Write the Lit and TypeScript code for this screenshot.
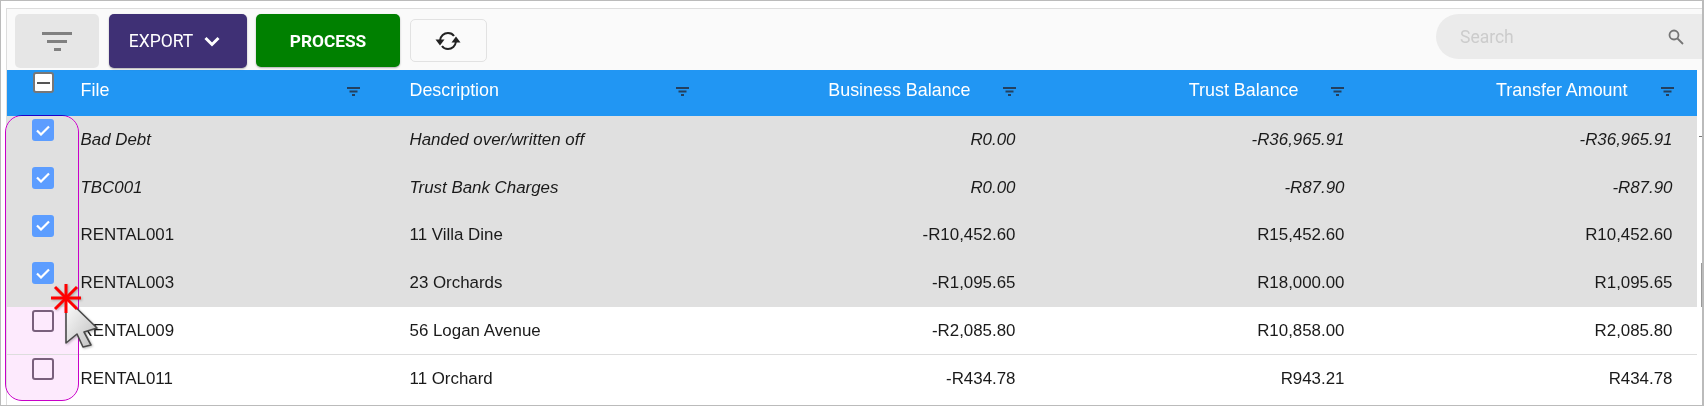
import { LitElement, html, css, svg } from "lit";
import { customElement } from "lit/decorators.js";

const rows = [
  { file: "Bad Debt", desc: "Handed over/written off", b: "R0.00", t: "-R36,965.91", a: "-R36,965.91", on: true, it: true },
  { file: "TBC001", desc: "Trust Bank Charges", b: "R0.00", t: "-R87.90", a: "-R87.90", on: true, it: true },
  { file: "RENTAL001", desc: "11 Villa Dine", b: "-R10,452.60", t: "R15,452.60", a: "R10,452.60", on: true, it: false },
  { file: "RENTAL003", desc: "23 Orchards", b: "-R1,095.65", t: "R18,000.00", a: "R1,095.65", on: true, it: false },
  { file: "RENTAL009", desc: "56 Logan Avenue", b: "-R2,085.80", t: "R10,858.00", a: "R2,085.80", on: false, it: false },
  { file: "RENTAL011", desc: "11 Orchard", b: "-R434.78", t: "R943.21", a: "R434.78", on: false, it: false },
];

const filterIcon = html`<svg class="hf" width="13" height="9" viewBox="0 0 13 9"><rect x="0" y="0" width="13" height="2"/><rect x="2.5" y="3.5" width="8" height="2"/><rect x="5" y="7" width="3" height="2"/></svg>`;

@customElement("app-root")
export class AppRoot extends LitElement {
  static styles = css`
    :host { display: block; width: 1704px; height: 406px; font-family: "Liberation Sans", Arial, sans-serif; }
    .frame { position: relative; box-sizing: border-box; width: 1704px; height: 406px; overflow: hidden; background: #fff;
      border: 1px solid #bbb; border-width: 1.5px 2px 1px 1.5px; padding: 7px 0 0 4.5px; }
    .panel { border-top: 1px solid #ddd; border-left: 1px solid #ddd; height: 100%; box-sizing: border-box; }
    .toolbar { height: 61px; box-sizing: border-box; background: #fafafa; display: flex; align-items: flex-start; padding: 5px 0 0 8px; }
    .btn { box-sizing: border-box; display: flex; align-items: center; justify-content: center; border-radius: 5px; font-family: Roboto, sans-serif; font-size: 17.5px; color: #fff; height: 54px; }
    .f { width: 84px; background: #e6e6e6; margin-right: 10px; }
    .exp { width: 138px; background: #3f3075; margin-right: 9px; gap: 11px; padding-right: 6px; box-shadow: 0 1px 2px rgba(0,0,0,.3); }
    .proc { width: 144px; height: 53px; background: #008000; margin-right: 10px; font-weight: 700; font-size: 17.3px; padding-left: 1px; box-shadow: 0 1px 2px rgba(0,0,0,.3); }
    .ref { width: 77px; height: 43px; margin-top: 5px; background: #fafafa; border: 1px solid #e2e2e2; }
    .search { margin-left: auto; width: 266px; height: 45px; background: #ebebeb; border-radius: 23px 0 0 23px; box-sizing: border-box; display: flex; align-items: center; justify-content: space-between; padding: 0 18px 0 24px; color: #ccc; font-family: Roboto, sans-serif; font-size: 17.5px; }
    .grid { display: grid; grid-template-columns: 58px 308px 329px 329px 328px 328px 10px; width: 1690px; }
    .head { height: 46px; background: #2196f3; color: #fff; font-size: 17.9px; }
    .hc { display: flex; align-items: center; height: 41px; padding-right: 13px; box-sizing: border-box; }
    .hc.first { padding-left: 16px; justify-content: space-between; }
    .hc.second { padding-left: 37px; justify-content: space-between; }
    .hc.num { justify-content: flex-end; gap: 33px; }
    .hc.bal { padding-right: 15px; gap: 32px; }
    .hf { fill: #24405e; flex: none; margin-top: 1px; }
    .cbox { position: relative; z-index: 3; box-sizing: border-box; width: 22px; height: 22px; border-radius: 3px; margin: 3px 0 0 25px; display: flex; align-items: center; justify-content: center; }
    .cbox.on { background: #5c9dff; }
    .cbox.off { border: 2px solid #79607c; }
    .cbox.ind { background: #fff; border: 2px solid #777; width: 21px; height: 21px; margin: 2px 0 0 26px; }
    .cbox.ind::after { content: ""; width: 13px; height: 2px; background: #555; }
    .row { height: 47.75px; font-size: 16.9px; color: #1a1a1a; }
    .row.sel { background: #e0e0e0; }
    .row.line { border-bottom: 1px solid #ddd; box-sizing: border-box; }
    .row.it { font-style: italic; }
    .c { display: flex; align-items: center; height: 47.75px; }
    .c.first { padding-left: 16px; }
    .c.second { padding-left: 37px; }
    .c.num { justify-content: flex-end; padding-right: 14px; }
    .c.num.bal { padding-right: 15px; }
    .hl { position: absolute; z-index: 2; left: 4px; top: 113.5px; width: 74px; height: 286px; box-sizing: border-box; border: 1px solid #c800c8; border-radius: 17px; background: #fdeafd; mix-blend-mode: darken; }
    .cursor { position: absolute; z-index: 4; left: 48px; top: 281px; filter: drop-shadow(1px 1px 1px rgba(0,0,0,.25)); }
    .tick { position: absolute; right: 0; top: 135px; width: 3px; height: 1px; background: #777; }
    .sb { position: absolute; right: -1px; top: 262px; width: 2px; height: 44px; background: #999; }
  `;

  render() {
    return html`<div class="frame">
      <div class="panel">
        <div class="toolbar">
          <div class="btn f"><svg width="30" height="19" viewBox="0 0 30 19" fill="#808080"><rect width="30" height="3"/><rect x="5" y="8" width="20" height="3"/><rect x="12" y="16" width="7" height="3"/></svg></div>
          <div class="btn exp"><span>EXPORT</span><svg width="16" height="11" viewBox="0 0 16 11" fill="none" stroke="#fff" stroke-width="3"><path d="M1.5 2 8 8.5 14.5 2"/></svg></div>
          <div class="btn proc">PROCESS</div>
          <div class="btn ref"><svg width="26" height="20" viewBox="0 0 26 20" fill="none" stroke="#222" stroke-width="2"><path d="M5 9.5C5.5 5 9 2 13 2c2.6 0 4.8 1.1 6 3"/><path d="M21 10.5C20.5 15 17 18 13 18c-2.6 0-4.8-1.1-6-3"/><path d="M0.5 8.5H9.5L5 14.5Z" fill="#222" stroke="none"/><path d="M16.5 11.5H25.5L21 5.5Z" fill="#222" stroke="none"/></svg></div>
          <div class="search"><span>Search</span><svg width="16" height="16" viewBox="0 0 16 16" fill="none" stroke="#757575" stroke-width="1.8"><circle cx="6" cy="6" r="4.5"/><path d="M9.5 9.5 15 15"/></svg></div>
        </div>
        <div class="grid head">
          <div><div class="cbox ind"></div></div>
          <div class="hc first"><span>File</span>${filterIcon}</div>
          <div class="hc second"><span>Description</span>${filterIcon}</div>
          <div class="hc num bal"><span>Business Balance</span>${filterIcon}</div>
          <div class="hc num bal"><span>Trust Balance</span>${filterIcon}</div>
          <div class="hc num"><span>Transfer Amount</span>${filterIcon}</div>
          <div></div>
        </div>
        ${rows.map((r, i) => html`<div class="grid row ${r.on ? "sel" : ""} ${r.it ? "it" : ""} ${i === 4 ? "line" : ""}">
          <div><div class="cbox ${r.on ? "on" : "off"}">${r.on ? html`<svg width="14" height="11" viewBox="0 0 14 11" fill="none" stroke="#fff" stroke-width="2.2"><path d="M1 5.5 5 9.5 13 1.5"/></svg>` : ""}</div></div>
          <div class="c first">${r.file}</div>
          <div class="c second">${r.desc}</div>
          <div class="c num bal">${r.b}</div>
          <div class="c num">${r.t}</div>
          <div class="c num">${r.a}</div>
          <div></div>
        </div>`)}
      </div>
      <div class="hl"></div>
      <svg class="cursor" width="54" height="72" viewBox="0 0 54 72">
        <defs><linearGradient id="cg" x1="0" y1="0" x2="1" y2="1"><stop offset="0" stop-color="#fff"/><stop offset="1" stop-color="#bdbdbd"/></linearGradient></defs>
        ${svg`<path d="M17 16V61L28 52 34 65 42 63 35 50 48 46Z" fill="url(#cg)" stroke="#4a4a4a" stroke-width="1.6" stroke-linejoin="round"/>
        <g stroke="#ff0000" stroke-width="3"><path d="M2 16H32"/><path d="M17 2V31"/><path d="M6 5 28 27"/><path d="M28 5 6 27"/></g>`}
      </svg>
      <div class="tick"></div>
      <div class="sb"></div>
    </div>`;
  }
}
